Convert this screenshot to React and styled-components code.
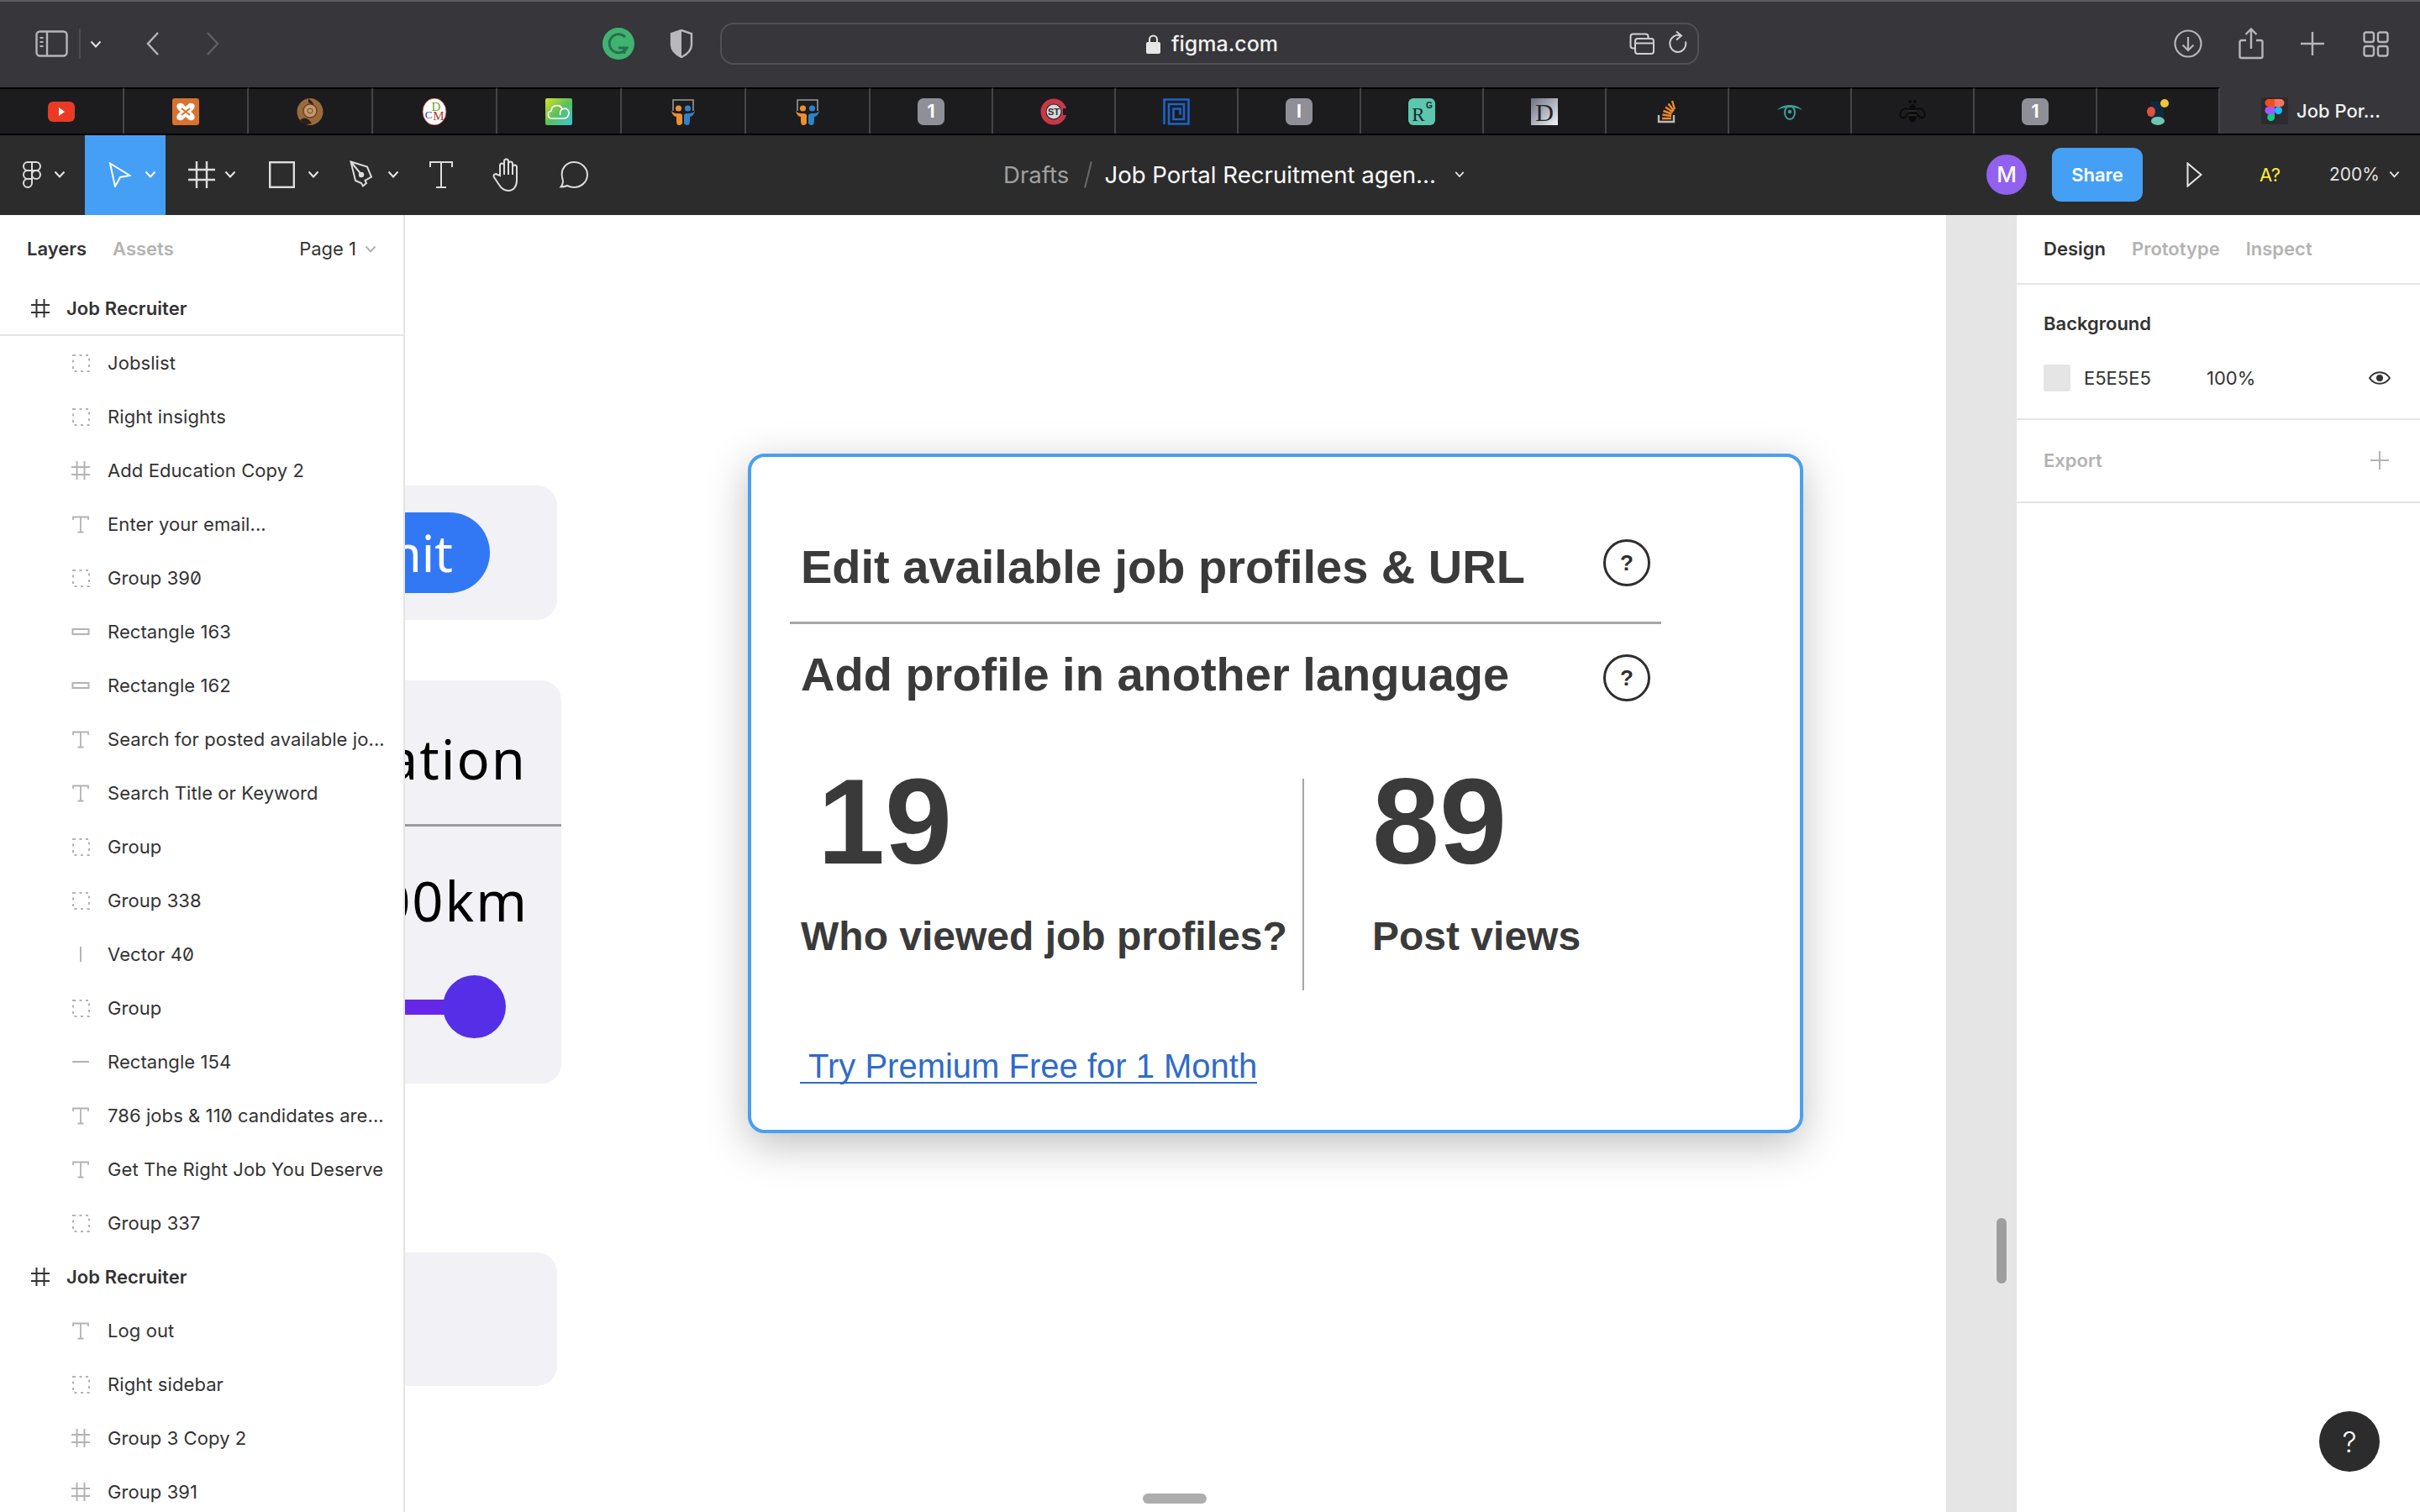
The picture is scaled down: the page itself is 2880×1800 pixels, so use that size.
import React from "react";
import styled, { createGlobalStyle } from "styled-components";

const GlobalStyle = createGlobalStyle`
  html, body { margin: 0; padding: 0; background: #fff; }
  body { width: 2880px; height: 1800px; overflow: hidden; font-family: Inter, "Liberation Sans", sans-serif; }
  * { box-sizing: border-box; }
`;

const Page = styled.div`
  width: 2880px;
  height: 1800px;
  display: flex;
  flex-direction: column;
  overflow: hidden;
`;

/* ---------- browser chrome ---------- */
const BrowserBar = styled.div`
  height: 104px;
  flex-shrink: 0;
  background: #37363b;
  border-top: 2px solid #5c5b60;
  display: grid;
  grid-template-columns: 857px 1165px 1fr;
  align-items: center;
  padding-bottom: 2px;
`;

const BrowserLeft = styled.div`
  display: flex;
  align-items: center;
  padding-left: 42px;
`;

const Sep = styled.div`
  width: 2px;
  height: 36px;
  background: #4d4c52;
  margin: 0 11px 0 13px;
`;

const UrlBar = styled.div`
  height: 50px;
  border: 2px solid #515056;
  border-radius: 16px;
  display: flex;
  align-items: center;
  position: relative;
  padding-left: 505px;
  color: #f1f1f1;
  font-size: 25px;
  font-weight: 500;
  gap: 13px;
`;

const UrlRight = styled.div`
  position: absolute;
  right: 12px;
  top: 7px;
  display: flex;
  align-items: center;
  gap: 16px;
`;

const BrowserRight = styled.div`
  display: flex;
  align-items: center;
  padding-left: 565px;
`;

const TabBar = styled.div`
  height: 57px;
  flex-shrink: 0;
  display: grid;
  grid-template-columns: repeat(7, 148px) repeat(11, 146px) 1fr;
  border-bottom: 2px solid #000;
`;

const Tab = styled.div`
  background: ${(p) => (p.$active ? "#37363b" : "#1c1c1e")};
  border-top: ${(p) => (p.$active ? "0" : "2px solid #000")};
  border-right: ${(p) => (p.$active ? "0" : "2px solid #454548")};
  display: flex;
  align-items: center;
  justify-content: ${(p) => (p.$active ? "flex-start" : "center")};
  padding-left: ${(p) => (p.$active ? "49px" : "0")};
  gap: 10px;
  color: #f2f2f2;
  font-size: 22px;
  font-weight: 500;
`;

const Fav = ({ children }) => (
  <svg width="32" height="32" viewBox="0 0 32 32">
    {children}
  </svg>
);

const GrayNum = ({ n }) => (
  <svg width="32" height="32" viewBox="0 0 32 32">
    <rect width="32" height="32" rx="7" fill="#8f8f97" />
    <text x="16" y="23" textAnchor="middle" fill="#fff" fontSize="21" fontWeight="700" fontFamily="Inter">{n}</text>
  </svg>
);

const People = () => (
  <Fav>
    <path d="M4 15V2h24v13" fill="none" stroke="#9a9a9a" strokeWidth="1.6" />
    <circle cx="10.5" cy="12" r="3.6" fill="#ec8f2d" />
    <circle cx="21.5" cy="12" r="3.6" fill="#2f82c9" />
    <path d="M2 15c3 3 5 3 8 3 2 0 4 0 5 2v10c-2 2-3 2-4 2-3 0-3-3-3-10-3 0-5-3-6-7z" fill="#ec8f2d" />
    <path d="M30 15c-3 3-5 3-8 3-2 0-4 0-5 2v10c2 2 3 2 4 2 3 0 3-3 3-10 3 0 5-3 6-7z" fill="#2f82c9" />
  </Fav>
);

const favicons = [
  <Fav key="yt">
    <rect x="0" y="4" width="32" height="24" rx="6" fill="#ea3a25" />
    <path d="M13 11l7 5-7 5z" fill="#fff" />
  </Fav>,
  <Fav key="xampp">
    <rect width="32" height="32" rx="3" fill="#d9722c" />
    <path d="M6 7c5-3 7 0 10 3 3-3 5-6 10-3 2 4-1 7-4 9 3 2 6 5 4 9-5 3-7 0-10-3-3 3-5 6-10 3-2-4 1-7 4-9-3-2-6-5-4-9z" fill="#fff" />
    <path d="M11 12l5 4 5-4M11 20l5-4 5 4" stroke="#d9722c" strokeWidth="2" fill="none" />
  </Fav>,
  <Fav key="brown">
    <ellipse cx="16" cy="16" rx="15.5" ry="16" fill="#9b6a3c" />
    <circle cx="16" cy="15" r="8" fill="#c59a6c" stroke="#6b4526" strokeWidth="1.5" />
    <circle cx="16" cy="15" r="3" fill="none" stroke="#6b4526" />
    <path d="M4 26c6-5 10-2 14 4l-8 2z" fill="#2b2018" />
    <path d="M14 0c4 4 6 5 6 8l-6-3z" fill="#2b2018" />
  </Fav>,
  <Fav key="dcm">
    <ellipse cx="16" cy="16" rx="14" ry="16" fill="#fff" stroke="#b5372a" strokeWidth="0.8" />
    <text x="18" y="15" textAnchor="middle" fontSize="15" fill="#6ea52c" fontFamily="Liberation Serif">D</text>
    <text x="9" y="24" textAnchor="middle" fontSize="13" fill="#2a3aa5" fontFamily="Liberation Serif">C</text>
    <text x="21" y="26" textAnchor="middle" fontSize="15" fill="#b5372a" fontFamily="Liberation Serif">M</text>
  </Fav>,
  <svg key="cloud" width="32" height="32" viewBox="0 0 32 32">
    <defs>
      <linearGradient id="cloudG" x1="0" y1="0" x2="1" y2="1">
        <stop offset="0" stopColor="#d6e22b" />
        <stop offset="0.5" stopColor="#5cc05a" />
        <stop offset="1" stopColor="#3bc4dc" />
      </linearGradient>
    </defs>
    <rect width="32" height="32" rx="2" fill="url(#cloudG)" />
    <path d="M8 24c-6 0-6-8-1-9 0-7 11-9 13-2 6-3 10 3 7 8-1 2-3 3-5 3zM20 13c-2 1-3 4-2 7" fill="none" stroke="#fff" strokeWidth="1.6" />
  </svg>,
  <People key="p1" />,
  <People key="p2" />,
  <GrayNum key="n1" n="1" />,
  <Fav key="st">
    <circle cx="16" cy="16" r="12.5" fill="none" stroke="#c9384a" strokeWidth="6" />
    <circle cx="16" cy="16" r="8.5" fill="#d8d8d8" />
    <text x="16" y="20" textAnchor="middle" fontSize="11" fontWeight="700" fill="#333" fontFamily="Liberation Sans">ST</text>
    <rect x="27" y="12" width="5" height="8" fill="#1c1c1e" />
  </Fav>,
  <Fav key="spiral">
    <path d="M1.5 31V1.5h29V30.5H7V7h18v18H12.5V12.5h8v7" fill="none" stroke="#1f62c8" strokeWidth="2.6" />
  </Fav>,
  <GrayNum key="i" n="I" />,
  <Fav key="rg">
    <rect width="32" height="32" rx="6" fill="#5cc6ae" />
    <text x="12" y="27" textAnchor="middle" fontSize="23" fill="#1a2a2a" fontFamily="Liberation Serif">R</text>
    <text x="25" y="12" textAnchor="middle" fontSize="10" fontWeight="700" fill="#1a2a2a" fontFamily="Liberation Sans">G</text>
  </Fav>,
  <svg key="d" width="32" height="32" viewBox="0 0 32 32">
    <defs>
      <linearGradient id="dG" x1="0" y1="0" x2="1" y2="1">
        <stop offset="0" stopColor="#6a7080" />
        <stop offset="1" stopColor="#f4f4f8" />
      </linearGradient>
    </defs>
    <rect width="32" height="32" fill="url(#dG)" />
    <text x="16" y="27" textAnchor="middle" fontSize="30" fill="#23252c" fontFamily="Liberation Serif">D</text>
  </svg>,
  <Fav key="so">
    <path d="M6 20v8h18v-8" fill="none" stroke="#b9b9b9" strokeWidth="2.4" />
    <path d="M10 24h11M10.5 19.5l10.5 1.5M11.5 15l10 3.5M14 10.5l9 6M17.5 6.5l6.5 8.5M22 3l3 10" stroke="#ee8a2b" strokeWidth="2.4" />
  </Fav>,
  <Fav key="eye">
    <path d="M1 14C8 6 24 6 31 14C24 10 8 10 1 14z" fill="#3aa099" />
    <ellipse cx="16" cy="17" rx="6" ry="8" fill="none" stroke="#3aa099" strokeWidth="2" />
    <circle cx="16" cy="16" r="2.2" fill="#3aa099" />
  </Fav>,
  <Fav key="bee">
    <ellipse cx="16" cy="18" rx="5" ry="11" fill="#0b0b0b" />
    <circle cx="13" cy="4" r="2" fill="#0b0b0b" />
    <circle cx="19" cy="4" r="2" fill="#0b0b0b" />
    <path d="M11 13c-7-3-11 4-9 9 3 3 7 0 9-4M21 13c7-3 11 4 9 9-3 3-7 0-9-4" fill="none" stroke="#0b0b0b" strokeWidth="1.8" />
    <path d="M11 15h10M11 20h10" stroke="#333" strokeWidth="1.5" />
  </Fav>,
  <GrayNum key="n2" n="1" />,
  <Fav key="dots">
    <rect x="8" y="4" width="15" height="26" fill="#10283f" />
    <circle cx="24" cy="6" r="5" fill="#f4c33a" />
    <ellipse cx="8" cy="16" rx="5" ry="6" fill="#e2503f" />
    <ellipse cx="16" cy="27" rx="8" ry="5" fill="#6ec5b0" />
  </Fav>,
];

const FigmaFav = () => (
  <svg width="32" height="32" viewBox="0 0 32 32">
    <rect width="32" height="32" rx="2" fill="#2c2c30" />
    <path d="M9 2h7v9H9a4.5 4.5 0 0 1 0-9z" fill="#f24e1e" />
    <path d="M16 2h7a4.5 4.5 0 0 1 0 9h-7z" fill="#ff7262" />
    <path d="M9 11h7v9H9a4.5 4.5 0 0 1 0-9z" fill="#a259ff" />
    <circle cx="20.5" cy="15.5" r="4.5" fill="#1abcfe" />
    <path d="M9 20h7v5a4.5 4.5 0 1 1-7-5z" fill="#0acf83" />
  </svg>
);

/* ---------- figma toolbar ---------- */
const FigmaBar = styled.div`
  height: 95px;
  flex-shrink: 0;
  background: #2c2c2c;
  display: grid;
  grid-template-columns: 1194px 1fr auto;
  align-items: stretch;
`;

const Tools = styled.div`
  display: flex;
  align-items: stretch;
`;

const Tool = styled.div`
  width: ${(p) => p.$w || 96}px;
  background: ${(p) => (p.$active ? "#45a0f5" : "transparent")};
  display: flex;
  align-items: center;
  justify-content: ${(p) => (p.$center ? "center" : "flex-start")};
  padding-left: ${(p) => (p.$center ? 0 : 27)}px;
  padding-bottom: 2px;
  gap: ${(p) => p.$gap ?? 13}px;
`;

const Breadcrumb = styled.div`
  display: flex;
  align-items: center;
  padding-bottom: 2px;
  font-size: 27.6px;
  color: #fff;
`;

const Muted = styled.span`
  color: #a0a0a0;
`;

const Slash = styled.span`
  width: 2px;
  height: 32px;
  background: #6a6a6a;
  transform: rotate(14deg);
  margin: 0 18px 0 22px;
`;

const BarRight = styled.div`
  display: flex;
  align-items: center;
  padding: 0 24px 2px 0;
`;

const Avatar = styled.div`
  width: 48px;
  height: 48px;
  border-radius: 50%;
  background: #9261f0;
  color: #fff;
  font-size: 26px;
  font-weight: 500;
  display: flex;
  align-items: center;
  justify-content: center;
`;

const ShareButton = styled.div`
  width: 108px;
  height: 64px;
  margin-left: 30px;
  border-radius: 11px;
  background: #45a0f5;
  color: #fff;
  font-size: 22px;
  font-weight: 600;
  display: flex;
  align-items: center;
  justify-content: center;
`;

const Missing = styled.div`
  margin-left: 68px;
  color: #ffeb3b;
  font-size: 22px;
`;

const Zoom = styled.div`
  margin-left: 58px;
  margin-right: 11px;
  color: #e4e4e4;
  font-size: 21px;
`;

/* ---------- workspace ---------- */
const Workspace = styled.div`
  flex: 1;
  display: flex;
  min-height: 0;
`;

const LeftPanel = styled.div`
  width: 482px;
  flex-shrink: 0;
  background: #fff;
  border-right: 2px solid #e5e5e5;
  display: flex;
  flex-direction: column;
  position: relative;
  z-index: 2;
  overflow: hidden;
`;

const PanelTabs = styled.div`
  height: 80px;
  flex-shrink: 0;
  display: flex;
  align-items: center;
  padding-left: 32px;
  font-size: 22px;
  font-weight: 600;
`;

const TabLabel = styled.span`
  color: ${(p) => (p.$on ? "#333" : "#b3b3b3")};
  margin-left: ${(p) => p.$ml || 0}px;
`;

const PageSelect = styled.div`
  margin-left: auto;
  margin-right: 32px;
  display: flex;
  align-items: center;
  gap: 10px;
  font-weight: 400;
  color: #333;
`;

const LayerRow = styled.div`
  height: 64px;
  flex-shrink: 0;
  display: flex;
  align-items: center;
  padding-left: ${(p) => (p.$top ? 36 : 84)}px;
  gap: ${(p) => (p.$top ? 19 : 20)}px;
  font-size: 22px;
  letter-spacing: 0.08px;
  font-weight: ${(p) => (p.$top ? 600 : 400)};
  font-feature-settings: "zero" 1;
  color: #333;
  white-space: nowrap;
  border-bottom: ${(p) => (p.$first ? "2px solid #e5e5e5" : "0")};
`;

const IconBox = styled.span`
  width: 24px;
  height: 24px;
  display: flex;
  align-items: center;
  justify-content: center;
  flex-shrink: 0;
`;

const LayerIcon = ({ type, dark }) => {
  const c = dark ? "#333" : "#b3b3b3";
  let body = null;
  if (type === "group") {
    body = <rect x="3" y="3" width="19" height="19" fill="none" stroke={c} strokeWidth="2" strokeDasharray="3 4.5" />;
  } else if (type === "frame") {
    body = <path d="M1 8h22M1 17h22M7.5 1v22M16.5 1v22" fill="none" stroke={c} strokeWidth="2" />;
  } else if (type === "text") {
    body = <path d="M3 7V3.5h18V7M12 3.5v18M8.5 21.5h7" fill="none" stroke={c} strokeWidth="1.8" />;
  } else if (type === "rect") {
    body = <rect x="2.5" y="9" width="19" height="6" fill="none" stroke={c} strokeWidth="2" />;
  } else if (type === "line") {
    body = <path d="M2 12h20" stroke={c} strokeWidth="2" />;
  } else if (type === "vline") {
    body = <path d="M12 3v18" stroke={c} strokeWidth="2" />;
  }
  return (
    <IconBox>
      <svg width="24" height="24" viewBox="0 0 24 24">{body}</svg>
    </IconBox>
  );
};

const layers = [
  ["frame", "Job Recruiter", true],
  ["group", "Jobslist"],
  ["group", "Right insights"],
  ["frame", "Add Education Copy 2"],
  ["text", "Enter your email..."],
  ["group", "Group 390"],
  ["rect", "Rectangle 163"],
  ["rect", "Rectangle 162"],
  ["text", "Search for posted available jo..."],
  ["text", "Search Title or Keyword"],
  ["group", "Group"],
  ["group", "Group 338"],
  ["vline", "Vector 40"],
  ["group", "Group"],
  ["line", "Rectangle 154"],
  ["text", "786 jobs & 110 candidates are..."],
  ["text", "Get The Right Job You Deserve"],
  ["group", "Group 337"],
  ["frame", "Job Recruiter", true],
  ["text", "Log out"],
  ["group", "Right sidebar"],
  ["frame", "Group 3 Copy 2"],
  ["frame", "Group 391"],
];

/* canvas: everything in here sits at its own place on the free canvas */
const Canvas = styled.div`
  flex: 1;
  position: relative;
  overflow: hidden;
  background: #e5e5e5;
`;

const ArtFrame = styled.div`
  position: absolute;
  left: 0;
  top: 0;
  bottom: 0;
  width: 1834px;
  background: #fff;
`;

const GhostCard = styled.div`
  position: absolute;
  left: -400px;
  top: ${(p) => p.$top}px;
  width: ${(p) => p.$w}px;
  height: ${(p) => p.$h}px;
  background: #f1f1f6;
  border-radius: 24px;
  display: flex;
  flex-direction: column;
  align-items: flex-end;
  font-family: "Noto Sans", sans-serif;
  color: #000;
`;

const Pill = styled.div`
  width: 400px;
  height: 96px;
  margin: 32px 80px 0 0;
  border-radius: 48px;
  background: #3278f5;
  color: #fff;
  font-size: 60px;
  display: flex;
  align-items: center;
  justify-content: flex-end;
  padding-right: 44px;
`;

const GhostTitle = styled.div`
  height: 174px;
  width: 100%;
  border-bottom: 3px solid #9c9c9c;
  padding: 50px 41px 0 0;
  text-align: right;
  font-size: 65px;
  line-height: 86px;
  letter-spacing: 2px;
  white-space: nowrap;
`;

const GhostValue = styled.div`
  height: 177px;
  padding: 45px 39px 0 0;
  font-size: 65px;
  line-height: 86px;
  letter-spacing: 2px;
`;

const Slider = styled.div`
  display: flex;
  align-items: center;
  padding-right: 66px;
`;

const Track = styled.div`
  width: 200px;
  height: 18px;
  background: #6526e8;
`;

const Thumb = styled.div`
  width: 75px;
  height: 75px;
  margin-left: -2px;
  border-radius: 50%;
  background: #552ee8;
`;

const InsightCard = styled.div`
  position: absolute;
  left: 408px;
  top: 284px;
  width: 1256px;
  height: 809px;
  background: #fff;
  border: 4px solid #4a9ff0;
  border-radius: 20px;
  box-shadow: 0 14px 50px rgba(0, 0, 0, 0.25);
  font-family: "Liberation Sans", Arial, sans-serif;
  color: #3a3a3a;
`;

const QuestionRow = styled.div`
  display: flex;
  align-items: center;
  justify-content: space-between;
  height: 56px;
  width: 1037px;
  margin: ${(p) => p.$mt}px 0 0 46px;
  padding: 0 13px 0 13px;
  font-size: 56px;
  font-weight: 700;
`;

const QuestionLabel = styled.span`
  position: relative;
  top: ${(p) => p.$dy || 0}px;
`;

const Hint = styled.div`
  width: 56px;
  height: 56px;
  border: 3px solid #2e2e2e;
  border-radius: 50%;
  font-size: 26px;
  font-weight: 700;
  color: #2e2e2e;
  display: flex;
  align-items: center;
  justify-content: center;
`;

const Rule = styled.div`
  width: 1037px;
  height: 3px;
  margin: 42px 0 0 46px;
  background: #a6a6a6;
`;

const Stats = styled.div`
  display: flex;
  margin: 92px 0 0 59px;
  height: 252px;
`;

const Stat = styled.div`
  width: ${(p) => p.$w}px;
  margin-left: ${(p) => p.$ml || 0}px;
`;

const StatNumber = styled.div`
  font-size: 144px;
  font-weight: 700;
  line-height: 106px;
  margin-top: -1px;
  padding-left: ${(p) => p.$pl}px;
`;

const StatLabel = styled.div`
  font-size: 48px;
  font-weight: 700;
  line-height: 60px;
  margin-top: 53px;
  white-space: nowrap;
`;

const StatDivider = styled.div`
  width: 2px;
  background: #a6a6a6;
`;

const PremiumLink = styled.div`
  display: inline-block;
  margin: 71px 0 0 58px;
  padding-left: 10px;
  font-size: 40px;
  line-height: 38px;
  color: #2f6bc9;
  border-bottom: 2px solid #2f6bc9;
`;

const VScroll = styled.div`
  position: absolute;
  left: 1893px;
  top: 1193px;
  width: 14px;
  height: 80px;
  border-radius: 7px;
  background: #9e9e9e;
  border: 1px solid #ededed;
`;

const HScroll = styled.div`
  position: absolute;
  left: 878px;
  bottom: 10px;
  width: 76px;
  height: 12px;
  border-radius: 6px;
  background: #adadad;
`;

/* ---------- right panel ---------- */
const RightPanel = styled.div`
  width: 480px;
  flex-shrink: 0;
  background: #fff;
  display: flex;
  flex-direction: column;
  position: relative;
  font-size: 22px;
  color: #333;
`;

const Section = styled.div`
  height: ${(p) => p.$h}px;
  border-bottom: 2px solid #e5e5e5;
  padding: 0 32px;
`;

const DesignTabs = styled.div`
  height: 100%;
  display: flex;
  align-items: center;
  gap: 31px;
  font-weight: 600;
  padding-bottom: 2px;
`;

const SectionTitle = styled.div`
  font-weight: 600;
  height: 78px;
  display: flex;
  align-items: center;
  justify-content: space-between;
  padding-top: ${(p) => p.$pt || 0}px;
  color: ${(p) => p.$color || "#333"};
`;

const FillRow = styled.div`
  display: grid;
  grid-template-columns: 48px 146px 1fr auto;
  align-items: center;
  height: 32px;
  margin-top: 17px;
  padding-right: 3px;
`;

const Swatch = styled.div`
  width: 32px;
  height: 32px;
  border-radius: 2px;
  background: #e5e5e5;
`;

const HelpButton = styled.div`
  position: absolute;
  right: 48px;
  bottom: 48px;
  width: 72px;
  height: 72px;
  border-radius: 50%;
  background: #2c2c2c;
  color: #fff;
  font-size: 34px;
  font-weight: 300;
  display: flex;
  align-items: center;
  justify-content: center;
`;

const Chevron = ({ color = "#e8e8e8", w = 14 }) => (
  <svg width={w} height="9" viewBox="0 0 14 9" style={{ flexShrink: 0 }}>
    <path d="M1.5 1.5L7 7.5l5.5-6" fill="none" stroke={color} strokeWidth="2" />
  </svg>
);

const Stroke = ({ w, h, ml, vb, color = "#b6b6ba", sw = 2.4, children }) => (
  <svg width={w} height={h} viewBox={vb || `0 0 ${w} ${h}`} fill="none" stroke={color} strokeWidth={sw} style={{ marginLeft: ml || 0, flexShrink: 0 }}>
    {children}
  </svg>
);

const toolGray = "#dcdcdc";

export default function App() {
  return (
    <Page>
      <GlobalStyle />
      <BrowserBar>
        <BrowserLeft>
          <Stroke w={39} h={32}>
            <rect x="1.5" y="1.5" width="36" height="29" rx="4" />
            <path d="M14 1.5v29" />
            <path d="M5.5 9h4M5.5 14h4M5.5 19h4" strokeWidth="2" />
          </Stroke>
          <Sep />
          <Chevron color="#e4e4e6" />
          <Stroke w={17} h={30} ml={52}>
            <path d="M15 2L3 15l12 13" />
          </Stroke>
          <Stroke w={17} h={30} ml={55} color="#5f5e64">
            <path d="M2 2l12 13L2 28" />
          </Stroke>
          <svg width="38" height="38" viewBox="0 0 38 38" style={{ marginLeft: 455 }}>
            <circle cx="19" cy="19" r="19" fill="#3fb372" />
            <path d="M27 11a11 11 0 1 0 2 13H19" fill="none" stroke="#2a6f4b" strokeWidth="3" />
            <path d="M26 24v7" stroke="#2a6f4b" strokeWidth="3" />
          </svg>
          <svg width="28" height="34" viewBox="0 0 28 34" style={{ marginLeft: 42 }}>
            <path d="M14 1l12 4v13c0 7-6 12-12 15C8 30 2 25 2 18V5z" fill="none" stroke="#b8b8bd" strokeWidth="2.4" />
            <path d="M14 1L2 5v13c0 7 6 12 12 15z" fill="#b8b8bd" />
          </svg>
        </BrowserLeft>
        <UrlBar>
          <svg width="17" height="23" viewBox="0 0 17 23">
            <path d="M4 10V6a4.5 4.5 0 0 1 9 0v4" fill="none" stroke="#e6e6e6" strokeWidth="2" />
            <rect y="9" width="17" height="14" rx="2" fill="#e6e6e6" />
          </svg>
          figma.com
          <UrlRight>
            <Stroke w={30} h={26} color="#d0d0d2" sw={2}>
              <rect x="1.5" y="1.5" width="21" height="17" rx="3" />
              <rect x="7" y="7" width="22" height="18" rx="3" fill="#37363b" />
              <path d="M8 12.5h20" />
            </Stroke>
            <Stroke w={23} h={32} color="#d0d0d2" sw={2}>
              <path d="M15 6.5a9.5 10 0 1 0 6 7" />
              <path d="M10 1.5l6 5-6 5" />
            </Stroke>
          </UrlRight>
        </UrlBar>
        <BrowserRight>
          <Stroke w={34} h={34} sw={2.2}>
            <circle cx="17" cy="17" r="15.5" />
            <path d="M17 9v16M10.5 18.5L17 25l6.5-6.5" />
          </Stroke>
          <Stroke w={30} h={38} ml={43}>
            <path d="M9 15H3.5a2 2 0 0 0-2 2v17a2 2 0 0 0 2 2h23a2 2 0 0 0 2-2V17a2 2 0 0 0-2-2H21" />
            <path d="M15 25V2M8.5 8L15 1.5 21.5 8" />
          </Stroke>
          <Stroke w={28} h={28} ml={44}>
            <path d="M14 0v28M0 14h28" />
          </Stroke>
          <Stroke w={31} h={31} ml={46}>
            <rect x="1.5" y="1.5" width="11.5" height="11.5" rx="2.5" />
            <rect x="18" y="1.5" width="11.5" height="11.5" rx="2.5" />
            <rect x="1.5" y="18" width="11.5" height="11.5" rx="2.5" />
            <rect x="18" y="18" width="11.5" height="11.5" rx="2.5" />
          </Stroke>
        </BrowserRight>
      </BrowserBar>

      <TabBar>
        {favicons.map((icon) => (
          <Tab key={icon.key}>{icon}</Tab>
        ))}
        <Tab $active>
          <FigmaFav />
          Job Por...
        </Tab>
      </TabBar>

      <FigmaBar>
        <Tools>
          <Tool $w={101} $gap={15}>
            <Stroke w={22} h={32} color={toolGray} sw={2}>
              <path d="M11 1H6a5 5 0 0 0 0 10h5zM11 1h5a5 5 0 0 1 0 10h-5zM11 11H6a5 5 0 0 0 0 10h5zM11 21H6a5 5 0 1 0 5 5zM21 16a5 5 0 1 1-10 0 5 5 0 0 1 10 0z" />
            </Stroke>
            <Chevron />
          </Tool>
          <Tool $active $gap={16}>
            <Stroke w={28} h={30} color="#fff" sw={2}>
              <path d="M3 1.5L26.5 16 15 18 9 29z" />
            </Stroke>
            <Chevron color="#fff" />
          </Tool>
          <Tool $gap={11}>
            <Stroke w={32} h={32} color={toolGray}>
              <path d="M0 10h32M0 22h32M10 0v32M22 0v32" />
            </Stroke>
            <Chevron />
          </Tool>
          <Tool $gap={15}>
            <Stroke w={31} h={32} color={toolGray}>
              <rect x="1.2" y="1.2" width="28.6" height="29.6" />
            </Stroke>
            <Chevron />
          </Tool>
          <Tool>
            <Stroke w={32} h={33} color={toolGray} sw={2}>
              <path d="M1.5 1.5L21 7.5l5 12-7.5 4.5 1.5 3-4 3.5-2-3.5L7 24 1.5 1.5zM1.5 1.5l11.5 14" />
              <circle cx="14" cy="17" r="2.2" fill={toolGray} />
            </Stroke>
            <Chevron />
          </Tool>
          <Tool $w={80} $center>
            <Stroke w={28} h={32} color={toolGray} sw={2}>
              <path d="M1 7V1h26v6M14 1v30M8 31h12" />
            </Stroke>
          </Tool>
          <Tool $w={78} $center>
            <Stroke w={36} h={40} color={toolGray} sw={2}>
              <path d="M9 21V9a2.5 2.5 0 0 1 5 0V4a2.5 2.5 0 0 1 5 0v3a2.5 2.5 0 0 1 5 0v4a2.5 2.5 0 0 1 5 0v16c0 7-4 12-10 12-5 0-8-2-11-7l-6-9c-2-3 2-5 4-3z" />
              <path d="M14 9v11M19 5v15M24 8v12" />
            </Stroke>
          </Tool>
          <Tool $w={80} $center>
            <Stroke w={36} h={34} color={toolGray} sw={2}>
              <path d="M2.5 31.5C6 27 5 24 4 20 2 10 9 2 18 2c9 0 16 7 16 15 0 9-8 15-16 15-4 0-6-1-8-2-2 1-5 1.5-7.5 1.5z" />
            </Stroke>
          </Tool>
        </Tools>
        <Breadcrumb>
          <Muted>Drafts</Muted>
          <Slash />
          Job Portal Recruitment agen...
          <span style={{ width: 22 }} />
          <Chevron w={12} />
        </Breadcrumb>
        <BarRight>
          <Avatar>M</Avatar>
          <ShareButton>Share</ShareButton>
          <Stroke w={19} h={30} ml={52} color="#e8e8e8" sw={2}>
            <path d="M1.5 1.5L17.5 15l-16 13.5z" />
          </Stroke>
          <Missing>A?</Missing>
          <Zoom>200%</Zoom>
          <Chevron w={13} />
        </BarRight>
      </FigmaBar>

      <Workspace>
        <LeftPanel>
          <PanelTabs>
            <TabLabel $on>Layers</TabLabel>
            <TabLabel $ml={31}>Assets</TabLabel>
            <PageSelect>
              Page 1
              <Chevron color="#b3b3b3" />
            </PageSelect>
          </PanelTabs>
          {layers.map(([type, name, top], i) => (
            <LayerRow key={i} $top={top} $first={i === 0}>
              <LayerIcon type={type} dark={top} />
              {name}
            </LayerRow>
          ))}
        </LeftPanel>

        <Canvas>
          <ArtFrame />
          <GhostCard $top={322} $w={581} $h={160}>
            <Pill>Submit</Pill>
          </GhostCard>
          <GhostCard $top={554} $w={586} $h={480}>
            <GhostTitle>Location</GhostTitle>
            <GhostValue>100km</GhostValue>
            <Slider>
              <Track />
              <Thumb />
            </Slider>
          </GhostCard>
          <GhostCard $top={1235} $w={581} $h={159} />

          <InsightCard>
            <QuestionRow $mt={98}>
              <QuestionLabel $dy={4}>Edit available job profiles &amp; URL</QuestionLabel>
              <Hint>?</Hint>
            </QuestionRow>
            <Rule />
            <QuestionRow $mt={36}>
              <QuestionLabel $dy={-5}>Add profile in another language</QuestionLabel>
              <Hint>?</Hint>
            </QuestionRow>
            <Stats>
              <Stat $w={597}>
                <StatNumber $pl={20}>19</StatNumber>
                <StatLabel>Who viewed job profiles?</StatLabel>
              </Stat>
              <StatDivider />
              <Stat $w={400} $ml={81}>
                <StatNumber $pl={0}>89</StatNumber>
                <StatLabel>Post views</StatLabel>
              </Stat>
            </Stats>
            <PremiumLink>Try Premium Free for 1 Month</PremiumLink>
          </InsightCard>

          <VScroll />
          <HScroll />
        </Canvas>

        <RightPanel>
          <Section $h={83}>
            <DesignTabs>
              <TabLabel $on>Design</TabLabel>
              <TabLabel>Prototype</TabLabel>
              <TabLabel>Inspect</TabLabel>
            </DesignTabs>
          </Section>
          <Section $h={161}>
            <SectionTitle $pt={14}>Background</SectionTitle>
            <FillRow>
              <Swatch />
              <span>E5E5E5</span>
              <span>100%</span>
              <svg width="26" height="16" viewBox="0 0 26 16">
                <path d="M1 8c6-9 18-9 24 0-6 9-18 9-24 0z" fill="none" stroke="#333" strokeWidth="2" />
                <circle cx="13" cy="8" r="4" fill="#333" />
              </svg>
            </FillRow>
          </Section>
          <Section $h={99}>
            <SectionTitle $pt={18} $color="#b3b3b3">
              Export
              <svg width="24" height="24" viewBox="0 0 24 24" style={{ marginRight: 4 }}>
                <path d="M12 1v22M1 12h22" stroke="#b3b3b3" strokeWidth="2" />
              </svg>
            </SectionTitle>
          </Section>
          <HelpButton>?</HelpButton>
        </RightPanel>
      </Workspace>
    </Page>
  );
}
